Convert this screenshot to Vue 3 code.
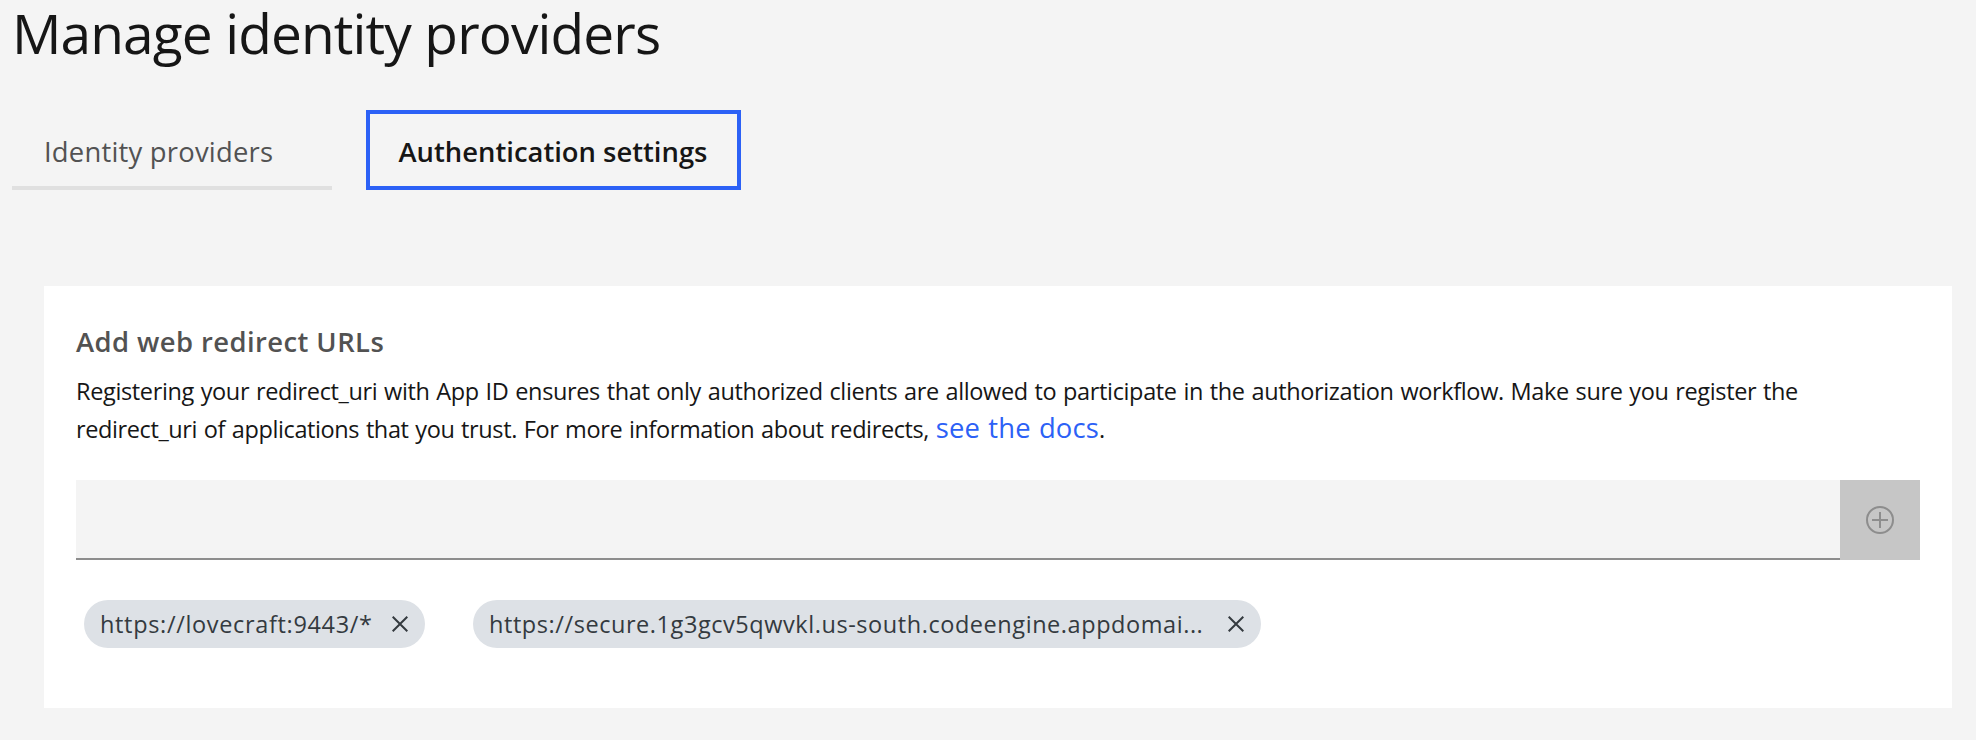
<script setup>
const tags = [
  { text: 'https://lovecraft:9443/*', kind: 'short' },
  { text: 'https://secure.1g3gcv5qwvkl.us-south.codeengine.appdomai...', kind: 'long' },
]
</script>

<template>
  <main class="page">
    <h1 class="title">Manage identity providers</h1>

    <nav class="tabs">
      <a class="tab">Identity providers</a>
      <a class="tab active">Authentication settings</a>
    </nav>

    <section class="card">
      <h2 class="heading">Add web redirect URLs</h2>
      <p class="description">
        <span class="line">Registering your redirect_uri with App ID ensures that only authorized clients are allowed to participate in the authorization workflow. Make sure you register the</span>
        <span class="line second">redirect_uri of applications that you trust. For more information about redirects, <a class="link">see the docs</a>.</span>
      </p>

      <div class="field">
        <input class="input" type="text" />
        <button class="add" disabled aria-label="Add">
          <svg width="32" height="32" viewBox="0 0 32 32" fill="none" stroke="#8d8d8d" stroke-width="2">
            <circle cx="16" cy="16" r="13" />
            <path d="M16 8v16M8 16h16" />
          </svg>
        </button>
      </div>

      <div class="tags">
        <span v-for="tag in tags" :key="tag.text" class="tag" :class="tag.kind">
          <span class="tag-text">{{ tag.text }}</span>
          <svg width="16" height="16" viewBox="0 0 16 16" fill="none" stroke="#343a3f" stroke-width="2">
            <path d="M0.7 0.7L15.3 15.3M15.3 0.7L0.7 15.3" />
          </svg>
        </span>
      </div>
    </section>
  </main>
</template>

<style>
body {
  background: #f4f4f4;
}
</style>

<style scoped>
.page {
  box-sizing: border-box;
  height: 740px;
  background: #f4f4f4;
  color: #161616;
  font-family: "Open Sans", "Noto Sans", sans-serif;
}

.title {
  height: 110px;
  margin: 0;
  padding-left: 12px;
  box-sizing: border-box;
  font-size: 55px;
  font-weight: 400;
  line-height: 65px;
  letter-spacing: -0.88px;
}

.tabs {
  display: flex;
  gap: 34px;
  height: 80px;
  padding-left: 12px;
}

.tab {
  box-sizing: border-box;
  width: 320px;
  height: 80px;
  padding: 4px 0 0 32px;
  border-bottom: 4px solid #e0e0e0;
  color: #525252;
  font-size: 27.4px;
  line-height: 76px;
  letter-spacing: 0.22px;
  white-space: nowrap;
}

.tab.active {
  width: 375px;
  padding: 0 0 0 28.5px;
  border: 4px solid #2c61f6;
  color: #161616;
  font-weight: 600;
  letter-spacing: 0;
}

.card {
  box-sizing: border-box;
  height: 422px;
  margin: 96px 24px 0 44px;
  padding: 36px 32px 0;
  background: #fff;
}

.heading {
  margin: 0 0 10px;
  color: #525252;
  font-size: 27.4px;
  font-weight: 600;
  line-height: 40px;
  letter-spacing: 0.43px;
}

.description {
  margin: 0 0 32px;
  font-size: 23.5px;
  line-height: 38px;
}

.line {
  display: block;
  height: 38px;
  letter-spacing: -0.36px;
  word-spacing: 1px;
  white-space: nowrap;
}

.line.second {
  letter-spacing: -0.39px;
}

.link {
  color: #2c61f6;
  font-size: 27.4px;
  line-height: 0;
  letter-spacing: 0.15px;
}

.field {
  display: flex;
  height: 80px;
}

.input {
  box-sizing: border-box;
  flex: 1;
  min-width: 0;
  height: 80px;
  padding: 0 32px;
  border: 0;
  border-bottom: 2px solid #8d8d8d;
  border-radius: 0;
  background: #f4f4f4;
  font: inherit;
}

.add {
  display: flex;
  align-items: center;
  justify-content: center;
  width: 80px;
  height: 80px;
  padding: 0;
  border: 0;
  background: #c6c6c6;
}

.tags {
  display: flex;
  gap: 48px;
  margin: 40px 0 0 8px;
}

.tag {
  display: flex;
  align-items: center;
  justify-content: space-between;
  box-sizing: border-box;
  width: 341px;
  height: 48px;
  padding: 0 17px 0 16px;
  border-radius: 24px;
  background: #dde1e6;
  color: #343a3f;
}

.tag.long {
  width: 788px;
}

.tag-text {
  font-size: 23.5px;
  line-height: 46px;
  letter-spacing: 0.66px;
  white-space: nowrap;
}

.long .tag-text {
  letter-spacing: 0.56px;
}
</style>
